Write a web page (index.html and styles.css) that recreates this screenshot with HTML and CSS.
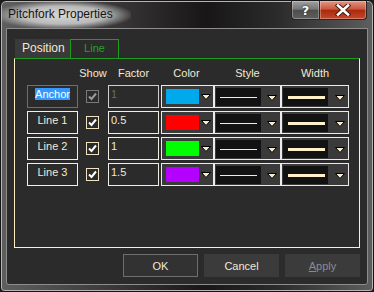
FILE: index.html
```html
<!DOCTYPE html>
<html lang="en">
<head>
    <meta charset="UTF-8">
    <meta name="viewport" content="width=device-width, initial-scale=1.0">
    <title>Pitchfork Properties</title>
    <link rel="stylesheet" href="styles.css">
</head>
<body>
    <div class="window">
        <div class="titlebar">
            <span class="title">Pitchfork Properties</span>
            <div class="caption">
                <button class="cap help">?</button>
                <button class="cap close">
                    <svg width="16" height="12" viewBox="0 0 16 12">
                        <path d="M3 1.5 L13 10.5 M13 1.5 L3 10.5" stroke="#3a1a10" stroke-width="4.5" stroke-linecap="square"/>
                        <path d="M3 1.5 L13 10.5 M13 1.5 L3 10.5" stroke="#ffffff" stroke-width="2.6" stroke-linecap="square"/>
                    </svg>
                </button>
            </div>
        </div>

        <div class="client">
            <div class="tabs">
                <div class="tab">Position</div>
                <div class="tab active">Line</div>
            </div>

            <div class="panel">
                <div class="grid">
                    <div></div>
                    <div class="head">Show</div>
                    <div class="head">Factor</div>
                    <div class="head">Color</div>
                    <div class="head">Style</div>
                    <div class="head">Width</div>

                    <!-- Anchor -->
                    <div class="name disabled"><span class="sel">Anchor</span></div>
                    <div class="check disabled">
                        <svg width="11" height="11" viewBox="0 0 11 11"><path d="M2 5.5 L4.5 8 L9 2.5" fill="none" stroke="#9a9a9a" stroke-width="2"/></svg>
                    </div>
                    <div class="factor disabled">1</div>
                    <div class="combo color-combo"><span class="swatch" style="background:#00a8ec"></span><svg class="arrow" width="10" height="6" viewBox="0 0 10 6"><path d="M0.5 0.5 H9.5 L5 5.5 Z" fill="#f7ebcb" stroke="#000"/></svg></div>
                    <div class="combo"><span class="preview"><span class="thin"></span></span><svg class="arrow" width="10" height="6" viewBox="0 0 10 6"><path d="M0.5 0.5 H9.5 L5 5.5 Z" fill="#f7ebcb" stroke="#000"/></svg></div>
                    <div class="combo"><span class="preview"><span class="thick"></span></span><svg class="arrow" width="10" height="6" viewBox="0 0 10 6"><path d="M0.5 0.5 H9.5 L5 5.5 Z" fill="#f7ebcb" stroke="#000"/></svg></div>

                    <!-- Line 1 -->
                    <div class="name">Line 1</div>
                    <div class="check">
                        <svg width="11" height="11" viewBox="0 0 11 11"><path d="M2 5.5 L4.5 8 L9 2.5" fill="none" stroke="#fff" stroke-width="2"/></svg>
                    </div>
                    <div class="factor">0.5</div>
                    <div class="combo color-combo"><span class="swatch" style="background:#ff0000"></span><svg class="arrow" width="10" height="6" viewBox="0 0 10 6"><path d="M0.5 0.5 H9.5 L5 5.5 Z" fill="#f7ebcb" stroke="#000"/></svg></div>
                    <div class="combo"><span class="preview"><span class="thin"></span></span><svg class="arrow" width="10" height="6" viewBox="0 0 10 6"><path d="M0.5 0.5 H9.5 L5 5.5 Z" fill="#f7ebcb" stroke="#000"/></svg></div>
                    <div class="combo"><span class="preview"><span class="thick"></span></span><svg class="arrow" width="10" height="6" viewBox="0 0 10 6"><path d="M0.5 0.5 H9.5 L5 5.5 Z" fill="#f7ebcb" stroke="#000"/></svg></div>

                    <!-- Line 2 -->
                    <div class="name">Line 2</div>
                    <div class="check">
                        <svg width="11" height="11" viewBox="0 0 11 11"><path d="M2 5.5 L4.5 8 L9 2.5" fill="none" stroke="#fff" stroke-width="2"/></svg>
                    </div>
                    <div class="factor">1</div>
                    <div class="combo color-combo"><span class="swatch" style="background:#00ff00"></span><svg class="arrow" width="10" height="6" viewBox="0 0 10 6"><path d="M0.5 0.5 H9.5 L5 5.5 Z" fill="#f7ebcb" stroke="#000"/></svg></div>
                    <div class="combo"><span class="preview"><span class="thin"></span></span><svg class="arrow" width="10" height="6" viewBox="0 0 10 6"><path d="M0.5 0.5 H9.5 L5 5.5 Z" fill="#f7ebcb" stroke="#000"/></svg></div>
                    <div class="combo"><span class="preview"><span class="thick"></span></span><svg class="arrow" width="10" height="6" viewBox="0 0 10 6"><path d="M0.5 0.5 H9.5 L5 5.5 Z" fill="#f7ebcb" stroke="#000"/></svg></div>

                    <!-- Line 3 -->
                    <div class="name">Line 3</div>
                    <div class="check">
                        <svg width="11" height="11" viewBox="0 0 11 11"><path d="M2 5.5 L4.5 8 L9 2.5" fill="none" stroke="#fff" stroke-width="2"/></svg>
                    </div>
                    <div class="factor">1.5</div>
                    <div class="combo color-combo"><span class="swatch" style="background:#b300ff"></span><svg class="arrow" width="10" height="6" viewBox="0 0 10 6"><path d="M0.5 0.5 H9.5 L5 5.5 Z" fill="#f7ebcb" stroke="#000"/></svg></div>
                    <div class="combo"><span class="preview"><span class="thin"></span></span><svg class="arrow" width="10" height="6" viewBox="0 0 10 6"><path d="M0.5 0.5 H9.5 L5 5.5 Z" fill="#f7ebcb" stroke="#000"/></svg></div>
                    <div class="combo"><span class="preview"><span class="thick"></span></span><svg class="arrow" width="10" height="6" viewBox="0 0 10 6"><path d="M0.5 0.5 H9.5 L5 5.5 Z" fill="#f7ebcb" stroke="#000"/></svg></div>
                </div>
            </div>

            <div class="buttons">
                <button class="btn default">OK</button>
                <button class="btn">Cancel</button>
                <button class="btn" disabled><u>A</u>pply</button>
            </div>
        </div>
    </div>
</body>
</html>
```

FILE: styles.css
```css
* {
    box-sizing: border-box;
}
body {
    margin: 0;
    background: #1c1c1c;
    font-family: "Liberation Sans", Arial, sans-serif;
    font-size: 11px;
    color: #f2e9d3;
}
.window {
    width: 374px;
    height: 292px;
    display: flex;
    flex-direction: column;
    padding: 0 5px 6px 5px;
    border: 1px solid #151515;
    border-radius: 6px 6px 4px 4px;
    background: linear-gradient(to right, #5f5f5f 0%, #3a3838 30%, #181616 55%, #2c2c2c 75%, #5e5e5e 100%);
    box-shadow: inset 0 0 0 1px #b4b4b4;
}
.titlebar {
    height: 27px;
    display: flex;
    align-items: flex-start;
}
.title {
    height: 27px;
    margin-left: -5px;
    padding: 6px 18px 0 7px;
    line-height: 14px;
    font-size: 12px;
    color: #151515;
    background: radial-gradient(ellipse at 48% 52%, rgba(222,222,222,0.97) 0%, rgba(205,205,205,0.85) 45%, rgba(150,150,150,0) 74%);
}
.caption {
    margin-left: auto;
    margin-right: 1px;
    display: flex;
}
.cap {
    height: 19px;
    padding: 0;
    border: 1px solid #262626;
    border-top: none;
    color: #fff;
    display: flex;
    align-items: center;
    justify-content: center;
    box-shadow: inset 0 0 0 1px rgba(255,255,255,0.3);
}
.help {
    width: 28px;
    border-radius: 0 0 0 4px;
    border-right: none;
    background: linear-gradient(#a0a0a0, #777 45%, #4e4e4e 52%, #5e5e5e);
    font-family: "DejaVu Sans", sans-serif;
    font-weight: bold;
    font-size: 13px;
    text-shadow: 0 0 2px #222, 0 0 1px #222;
}
.close {
    width: 48px;
    border-radius: 0 0 4px 0;
    background: linear-gradient(#e59684, #c9573c 45%, #a92a0e 52%, #c6472a);
}
.client {
    flex: 1;
    display: flex;
    flex-direction: column;
    padding: 10px 7px 6px 7px;
    border: 1px solid #8d8d8d;
    border-radius: 0 0 3px 3px;
    background: #2b2b2b;
}
.tabs {
    display: flex;
    height: 19px;
    margin-left: 1px;
}
.tab {
    width: 55px;
    padding-left: 7px;
    line-height: 19px;
    font-size: 12px;
    background: #3a3a3a;
}
.tab.active {
    width: 49px;
    padding: 0;
    line-height: 17px;
    font-size: 11px;
    text-align: center;
    color: #22a522;
    background: #2b2b2b;
    border: 1px solid #1f9a1f;
    border-bottom: none;
}
.panel {
    height: 190px;
    padding: 8px 0 0 12px;
    border: 1px solid #fbefc5;
    border-top-color: #1f9a1f;
}
.grid {
    display: grid;
    grid-template-columns: 51px 30px 51px 55px 67px 68px;
    grid-template-rows: 15px repeat(4, 23px);
    row-gap: 3px;
}
.head {
    line-height: 13px;
    text-align: center;
}
.name {
    border: 1px solid #f3efe6;
    padding-top: 2px;
    line-height: 12px;
    text-align: center;
}
.name.disabled {
    border-color: #6e6e6e;
}
.sel {
    background: #3399ff;
    color: #fff;
}
.check {
    width: 13px;
    height: 13px;
    margin: 5px 0 0 8px;
    border: 1px solid #f1e3bf;
    display: flex;
}
.check.disabled {
    border-color: #7a7a7a;
}
.factor {
    border: 1px solid #f0ede6;
    padding: 2px 0 0 2px;
    line-height: 12px;
}
.factor.disabled {
    border-color: #d0d0d0;
    color: #6a6a6a;
}
.combo {
    display: flex;
    align-items: center;
    justify-content: space-between;
    padding: 1px 3px 0 1px;
    border: 1px solid #ebebeb;
    background: #3a3a3a;
}
.color-combo {
    margin-left: 2px;
    padding: 0 2px 0 4px;
}
.swatch {
    width: 33px;
    height: 15px;
}
.preview {
    width: 45px;
    height: 18px;
    display: flex;
    align-items: center;
    background: #121212;
}
.thin {
    height: 1px;
    width: 37px;
    margin-left: 4px;
    background: #fbecc6;
}
.thick {
    height: 3px;
    width: 37px;
    margin-left: 5px;
    background: #fff0c9;
}
.arrow {
    display: block;
    margin-top: 1px;
}
.buttons {
    display: flex;
    justify-content: flex-end;
    gap: 6px;
    margin-top: 6px;
}
.btn {
    width: 75px;
    height: 23px;
    padding: 0;
    font-family: "Liberation Sans", Arial, sans-serif;
    font-size: 11px;
    color: #f2e9d3;
    background: #3b3b3b;
    border: 1px solid #3b3b3b;
}
.btn.default {
    background: #323232;
    border-color: #6e6e6e;
}
.btn:disabled {
    color: #8a8a96;
}
```
